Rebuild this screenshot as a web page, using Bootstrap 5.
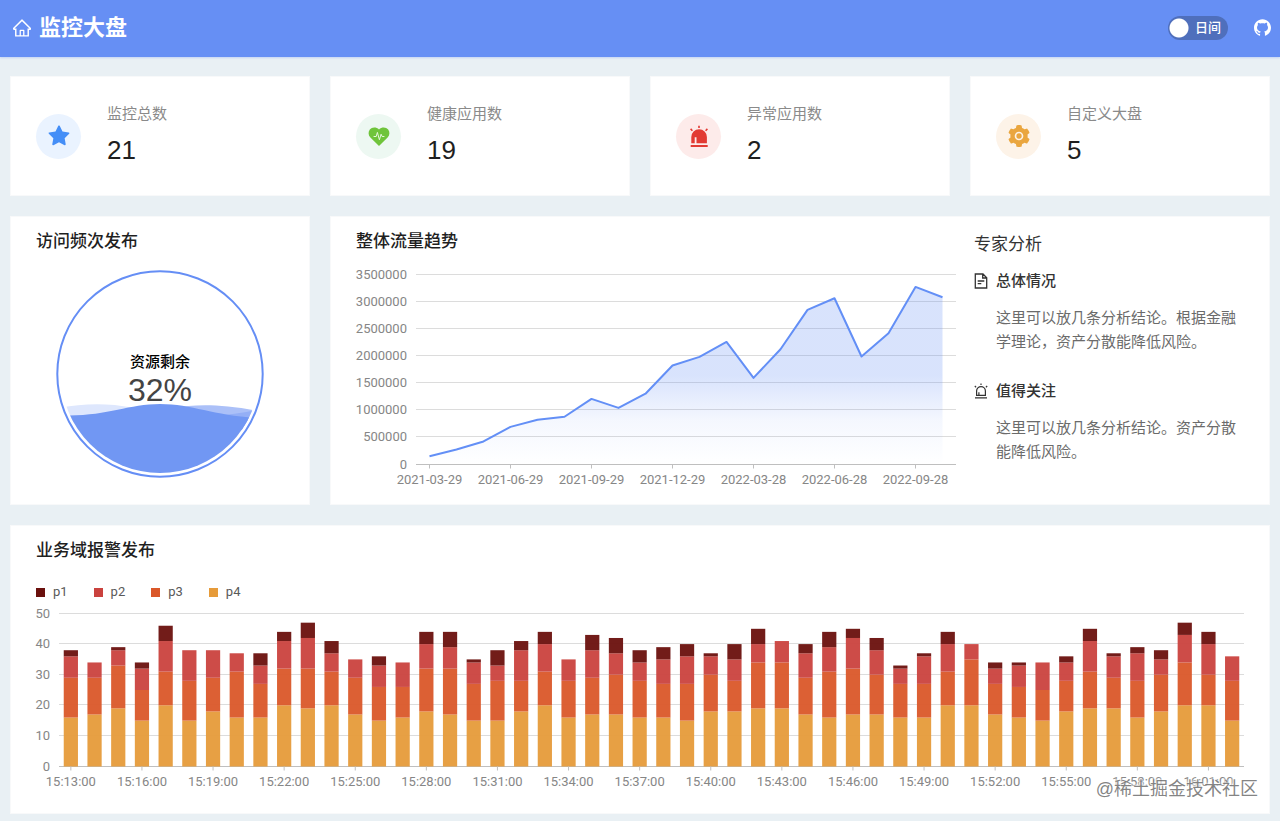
<!DOCTYPE html>
<html lang="zh-CN">
<head>
<meta charset="utf-8">
<meta name="viewport" content="width=device-width, initial-scale=1">
<title>监控大盘</title>
<link rel="stylesheet" href="https://cdn.jsdelivr.net/npm/bootstrap@5.3.0/dist/css/bootstrap.min.css">
<style>
  :root { --brand: #668ff4; --line: #5b8ff9; }
  body { background: #e9f0f4; color: #1f1f1f; font-family: "Liberation Sans", "Noto Sans CJK SC", sans-serif; font-size: 15px; line-height: 24px; }
  .topbar { background: var(--brand); height: 57px; padding: 0 9px 2px 13px; box-shadow: 0 1px 2px rgba(102, 143, 244, .3); }
  .topbar a { color: #fff; }
  .brand-title { font-size: 22px; line-height: 32px; font-weight: 700; margin: 0; }
  .mode-box { width: 60px; height: 24px; margin-right: 26px; }
  .form-check-input.mode-input { width: 60px; height: 24px; margin: 0; border: 0; border-radius: 12px; background: #4f6fbc radial-gradient(circle at 11px 12px, #fff 9px, transparent 10px) no-repeat; cursor: pointer; }
  .mode-text { position: absolute; right: 7px; top: 0; font-size: 13px; line-height: 24px; font-weight: 500; color: #fff; cursor: pointer; }
  .board { padding: 19px 10px 7px; }
  .board .row { --bs-gutter-x: 20px; --bs-gutter-y: 20px; margin-top: 0; }
  .board .row > * { margin-top: 0; margin-bottom: 20px; }
  .board .row > .col-12 { margin-bottom: 0; }
  .panel { height: 100%; background: #fff; border: 1px solid #f8f9fa; border-radius: 0; }
  .stat { min-height: 118px; padding: 0 25px; gap: 26px; }
  .stat-copy { padding-bottom: 4px; }
  .stat-icon { width: 45px; height: 45px; }
  .stat-label { color: #8a8a8a; }
  .stat-num { font-size: 26px; line-height: 32px; margin-top: 8px; }
  .bg-star { background: #eaf3ff; } .bg-heart { background: #edf8f2; }
  .bg-alert { background: #fdebea; } .bg-gear { background: #fdf3e8; }
  .panel-body { padding: 12px 25px; min-height: 287px; }
  .panel-title { font-size: 17px; line-height: 26px; font-weight: 500; margin: 0; }
  .gauge { width: 208px; margin: 15px auto 0; }
  .gauge-copy { position: absolute; left: 0; right: 0; top: 80px; text-align: center; }
  .gauge-name { color: #000; font-weight: 500; }
  .gauge-num { color: #444; font-size: 32px; line-height: 32px; }
  .trend-box { min-width: 0; margin-right: 18px; }
  .expert { flex: 0 0 270px; color: #333; padding-top: 3px; }
  .expert h2 { font-size: 17px; line-height: 26px; font-weight: 400; margin: 0 0 11px; }
  .expert h3 { font-size: 15px; line-height: 24px; font-weight: 500; margin: 0; }
  .expert p { color: #6b6b6b; margin: 13px 0 25px 22px; }
  .chart-svg { display: block; width: 100%; overflow: visible; }
  .chart-svg text, .legend { font-family: Roboto, sans-serif; font-size: 13px; }
  .chart-svg text { fill: #868686; }
  .legend { color: #595959; line-height: 16px; gap: 26px; margin: 20px 0 6px; padding: 0; list-style: none; }
  .legend li { gap: 8px; }
  .swatch { width: 9px; height: 9px; }
  .watermark { position: absolute; right: 11px; bottom: 11px; font-size: 18px; line-height: 26px; color: rgba(110, 110, 110, .85); text-shadow: 1px 1px 2px #fff, -1px -1px 2px #fff; }
  .c1 { fill: #6a100d; background: #6a100d; } .c2 { fill: #ca423e; background: #ca423e; }
  .c3 { fill: #da5729; background: #da5729; } .c4 { fill: #e69b3a; background: #e69b3a; }
</style>
</head>
<body>
<header class="topbar d-flex align-items-center justify-content-between">
  <a href="#" class="d-flex align-items-center gap-2 text-decoration-none">
    <svg width="18" height="18" viewBox="64 64 896 896" fill="currentColor" aria-hidden="true"><path d="M946.5 505L560.1 118.8l-25.9-25.9a31.5 31.5 0 00-44.4 0L77.5 505a63.9 63.9 0 00-18.8 46c.4 35.2 29.7 63.3 64.9 63.3h42.5V940h691.8V614.3h43.4c17.1 0 33.2-6.7 45.3-18.8a63.6 63.6 0 0018.7-45.3c0-17-6.7-33.1-18.8-45.2zM568 868H456V664h112v204zm217.9-325.7V868H632V640c0-22.1-17.9-40-40-40H432c-22.1 0-40 17.9-40 40v228H238.1V542.3h-96l370-369.7 23.1 23.1L882 542.3h-96.1z"/></svg>
    <h1 class="brand-title">监控大盘</h1>
  </a>
  <div class="d-flex align-items-center">
    <div class="mode-box position-relative">
      <input class="form-check-input mode-input" type="checkbox" role="switch" id="mode">
      <label class="mode-text" for="mode">日间</label>
    </div>
    <a href="#" aria-label="GitHub" class="d-flex"><svg width="17" height="17" viewBox="64 64 896 896" fill="currentColor"><path d="M511.6 76.3C264.3 76.2 64 276.4 64 523.5 64 718.9 189.3 885 363.8 946c23.5 5.9 19.9-10.8 19.9-22.2v-77.5c-135.7 15.9-141.2-73.9-150.3-88.9C215 726 171.5 718 184.5 703c30.9-15.9 62.4 4 98.9 57.9 26.4 39.1 77.9 32.5 104 26 5.7-23.5 17.9-44.5 34.7-60.8-140.6-25.2-199.2-111-199.2-213 0-49.5 16.3-95 48.3-131.7-20.4-60.5 1.9-112.3 4.9-120 58.1-5.2 118.5 41.6 123.2 45.3 33-8.9 70.7-13.6 112.9-13.6 42.4 0 80.2 4.9 113.5 13.9 11.3-8.6 67.3-48.8 121.3-43.9 2.9 7.7 24.7 58.3 5.5 118 32.4 36.8 48.9 82.7 48.9 132.3 0 102.2-59 188.1-200 212.9a127.5 127.5 0 0138.1 91v112.5c.8 9 0 17.9 15 17.9 177.1-59.7 304.6-227 304.6-424.1 0-247.2-200.4-447.3-447.5-447.3z"/></svg></a>
  </div>
</header>

<main class="container-fluid board">
  <div class="row">
    <div class="col-3"><section class="panel card"><div class="stat d-flex align-items-center">
      <span class="stat-icon bg-star rounded-circle d-flex align-items-center justify-content-center flex-shrink-0"><svg width="22" height="22" viewBox="64 52 896 896" fill="#448ef7"><path d="M908.1 353.1l-253.9-36.9L540.7 86.1c-3.1-6.3-8.2-11.4-14.5-14.5-15.8-7.8-35-1.3-42.9 14.5L369.8 316.2l-253.9 36.9c-7 1-13.4 4.3-18.3 9.3a32.05 32.05 0 00.6 45.3l183.7 179.1-43.4 252.9a31.95 31.95 0 0046.4 33.7L512 754l227.1 119.4c6.2 3.3 13.4 4.4 20.3 3.2 17.4-3 29.1-19.5 26.1-36.9l-43.4-252.9 183.7-179.1c5-4.9 8.3-11.3 9.3-18.3 2.7-17.5-9.5-33.7-27-36.3z"/></svg></span>
      <div class="stat-copy"><div class="stat-label">监控总数</div><div class="stat-num">21</div></div>
    </div></section></div>
    <div class="col-3"><section class="panel card"><div class="stat d-flex align-items-center">
      <span class="stat-icon bg-heart rounded-circle d-flex align-items-center justify-content-center flex-shrink-0"><svg width="22" height="22" viewBox="0 0 22 22"><path fill="#6fc43b" d="M11 21 2.4 12.6C.2 10.4 0 6.8 1.8 4.5 4 1.8 8.3 1.8 11 4.4c2.7-2.6 7-2.6 9.2.1 1.8 2.3 1.6 5.9-.6 8.1z"/><path fill="none" stroke="#e5f6dc" stroke-linejoin="round" stroke-linecap="round" d="M6 11.5h2.2L9.4 7.4l2 7.4 1.7-5.6 1 2.3H16"/></svg></span>
      <div class="stat-copy"><div class="stat-label">健康应用数</div><div class="stat-num">19</div></div>
    </div></section></div>
    <div class="col-3"><section class="panel card"><div class="stat d-flex align-items-center">
      <span class="stat-icon bg-alert rounded-circle d-flex align-items-center justify-content-center flex-shrink-0"><svg width="22" height="22" viewBox="0 0 22 22"><path fill="#e23a33" d="M3.3 12.1a7.8 7.8 0 0 1 15.6 0v6.2H8.5v-6H6.7v6H3.3zM2.7 20h17v2h-17z"/><path stroke="#e23a33" stroke-width="1.6" d="M11 .7V3M2.6 3.9l1.8 1.8M19.4 3.9l-1.8 1.8"/></svg></span>
      <div class="stat-copy"><div class="stat-label">异常应用数</div><div class="stat-num">2</div></div>
    </div></section></div>
    <div class="col-3"><section class="panel card"><div class="stat d-flex align-items-center">
      <span class="stat-icon bg-gear rounded-circle d-flex align-items-center justify-content-center flex-shrink-0"><svg width="22" height="22" viewBox="64 64 896 896" fill="#eaa63f"><path fill-rule="evenodd" d="M512.5 402.500a110 110 0 1 0 0 220a110 110 0 1 0 0-220zM924.800 626.100l-65.400-55.900c3.100-19 4.700-38.400 4.700-57.700s-1.600-38.800-4.700-57.700l65.400-55.900a32.030 32.030 0 009.300-35.200l-.9-2.600a442.500 442.500 0 00-79.600-137.700l-1.800-2.100a32.120 32.120 0 00-35.100-9.500l-81.200 28.900c-30-24.600-63.400-44-99.600-57.500l-15.700-84.900a32.050 32.050 0 00-25.800-25.700l-2.700-.5c-52-9.400-106.800-9.400-158.800 0l-2.700.5a32.050 32.050 0 00-25.800 25.700l-15.800 85.300a353.440 353.440 0 00-98.900 57.300l-81.800-29.100a32 32 0 00-35.100 9.500l-1.800 2.100a445.930 445.930 0 00-79.600 137.700l-.9 2.600c-4.500 12.500-.8 26.500 9.300 35.200l66.200 56.500c-3.100 18.800-4.600 38-4.600 57 0 19.200 1.500 38.400 4.600 57l-66 56.500a32.030 32.030 0 00-9.300 35.200l.9 2.600c18.100 50.300 44.800 96.800 79.600 137.700l1.800 2.100a32.120 32.120 0 0035.100 9.500l81.800-29.100c29.800 24.500 63 43.900 98.900 57.300l15.800 85.300a32.050 32.050 0 0025.800 25.700l2.700.5a448.270 448.270 0 00158.800 0l2.700-.5a32.050 32.050 0 0025.800-25.700l15.700-84.900c36.200-13.600 69.600-32.900 99.600-57.500l81.200 28.900a32 32 0 0035.100-9.500l1.800-2.100c34.800-41.100 61.500-87.400 79.600-137.700l.9-2.600c4.300-12.400.6-26.300-9.500-35zM512.500 336.500a176 176 0 1 1 0 352a176 176 0 1 1 0-352z"/></svg></span>
      <div class="stat-copy"><div class="stat-label">自定义大盘</div><div class="stat-num">5</div></div>
    </div></section></div>

    <div class="col-3"><section class="panel card"><div class="panel-body">
      <h2 class="panel-title">访问频次发布</h2>
      <div class="gauge position-relative">
        <svg class="d-block" width="208" height="208" viewBox="0 0 208 208" aria-hidden="true">
          <defs><clipPath id="bowl"><circle cx="104" cy="104" r="99"/></clipPath></defs>
          <g clip-path="url(#bowl)">
            <path fill="#dee7fd" d="M0 139C20 134 50 132 76 138L120 150H0z"/>
            <path fill="#abc0f8" d="M90 146C120 136 146 130 208 142V160H90z"/>
            <path fill="#94aff6" d="M150 145C172 146 184 143 208 139V160H150z"/>
            <path fill="#7197f3" d="M0 145C48 148 70 134 104 134S160 147 208 148V208H0z"/>
          </g>
          <circle cx="104" cy="104" r="102.700" fill="none" stroke="#658ef5" stroke-width="2"/>
        </svg>
        <div class="gauge-copy"><div class="gauge-name">资源剩余</div><div class="gauge-num">32%</div></div>
      </div>
    </div></section></div>

    <div class="col-9"><section class="panel card"><div class="panel-body d-flex">
      <div class="trend-box flex-grow-1">
        <h2 class="panel-title">整体流量趋势</h2>
        <svg class="chart-svg mt-3" id="trend" height="216" role="img" aria-label="整体流量趋势"></svg>
      </div>
      <aside class="expert">
        <h2>专家分析</h2>
        <h3 class="d-flex align-items-center gap-2"><svg width="14" height="16" viewBox="0 0 14 16" fill="none" stroke="currentColor" stroke-width="1.300"><path d="M1.300 1h7.700l3.700 3.700V15H1.300zM8.700 1v4h4M3.700 8h6.600M3.700 10.700h3.600"/></svg>总体情况</h3>
        <p>这里可以放几条分析结论。根据金融学理论，资产分散能降低风险。</p>
        <h3 class="d-flex align-items-center gap-2"><svg width="14" height="16" viewBox="0 0 14 16" fill="none" stroke="currentColor" stroke-width="1.200"><path d="M2.600 12.300V8a4.400 4.400 0 0 1 8.800 0v4.300zM4.900 12V9.300M1 14.900h12M7 .5v1.600M.8 3l1.300 1.200M13.200 3l-1.300 1.200"/></svg>值得关注</h3>
        <p class="mb-0">这里可以放几条分析结论。资产分散能降低风险。</p>
      </aside>
    </div></section></div>

    <div class="col-12"><section class="panel card position-relative"><div class="panel-body">
      <h2 class="panel-title">业务域报警发布</h2>
      <ul class="legend d-flex">
        <li class="d-flex align-items-center"><span class="swatch c1"></span>p1</li>
        <li class="d-flex align-items-center"><span class="swatch c2"></span>p2</li>
        <li class="d-flex align-items-center"><span class="swatch c3"></span>p3</li>
        <li class="d-flex align-items-center"><span class="swatch c4"></span>p4</li>
      </ul>
      <svg class="chart-svg" id="alarms" height="190" role="img" aria-label="业务域报警发布"></svg>
    </div><div class="watermark">@稀土掘金技术社区</div></section></div>
  </div>
</main>

<script src="https://cdn.jsdelivr.net/npm/bootstrap@5.3.0/dist/js/bootstrap.bundle.min.js"></script>
<script>
  // Monthly traffic, in thousands
  const traffic = [153, 276, 424, 693, 825, 880, 1208, 1043, 1304, 1824, 1982, 2258, 1595, 2124, 2848, 3063, 1989, 2419, 3271, 3082];
  const trafficDates = ['2021-03-29', '2021-06-29', '2021-09-29', '2021-12-29', '2022-03-28', '2022-06-28', '2022-09-28'];
  // Alarms per minute as running totals: p4, +p3, +p2, +p1
  const alarms = `16,29,36,38 17,29,34,34 19,33,38,39 15,25,32,34 20,31,41,46 15,28,38,38 18,29,38,38 16,31,37,37 16,27,33,37 20,32,41,44
    19,32,42,47 20,31,37,41 17,29,35,35 15,26,33,36 16,26,34,34 18,32,40,44 17,32,39,44 15,27,34,35 15,28,33,38 18,28,38,41
    20,31,40,44 16,28,35,35 17,29,38,43 17,30,37,42 16,28,34,38 16,27,35,39 15,27,36,40 18,30,36,37 18,28,35,40 19,34,40,45
    19,34,41,41 17,29,37,40 16,31,39,44 17,32,42,45 17,30,38,42 16,27,32,33 16,27,36,37 20,31,40,44 20,35,40,40 17,27,32,34
    16,26,33,34 15,25,34,34 18,28,34,36 19,31,41,45 19,29,36,37 16,28,37,39 18,30,35,38 20,34,43,47 20,30,40,44 15,28,36,36`
    .trim().split(/\s+/).map(s => s.split(',').map(Number));

  const grid = (left, right, y, base) =>
    `<line x1="${left}" x2="${right}" y1="${y}" y2="${y}" stroke="${base ? '#bfbfbf' : '#dcdcdc'}"/>`;
  const label = (x, y, text, anchor) => `<text x="${x}" y="${y}" text-anchor="${anchor}">${text}</text>`;
  const tick = (x, y) => `<line x1="${x}" x2="${x}" y1="${y}" y2="${y + 4}" stroke="#bfbfbf"/>`;

  function drawTrend() {
    const svg = document.getElementById('trend'), w = svg.clientWidth;
    const left = 60, top = 3.5, bottom = 193.5, step = (w - left) / traffic.length;
    const px = i => left + step * (i + .5), py = v => bottom - v / 3500 * (bottom - top);
    let out = '<defs><linearGradient id="fade" x1="0" x2="0" y1="0" y2="1"><stop offset=".5" stop-color="#658ff5" stop-opacity=".25"/><stop offset=".75" stop-color="#658ff5" stop-opacity=".07"/><stop offset="1" stop-color="#658ff5" stop-opacity="0"/></linearGradient></defs>';
    for (let v = 0; v <= 3500; v += 500) {
      const y = Math.round(py(v)) - .5;
      out += grid(left, w, y, v === 0) + label(51, y + 4, v * 1000, 'end');
    }
    const pts = traffic.map((v, i) => px(i) + ',' + py(v)).join(' ');
    out += `<polygon points="${px(0)},${bottom} ${pts} ${px(19)},${bottom}" fill="url(#fade)"/>`;
    out += `<polyline points="${pts}" fill="none" stroke="#638ff6" stroke-width="2" stroke-linejoin="round"/>`;
    trafficDates.forEach((d, i) => { out += tick(px(i * 3), bottom) + label(px(i * 3), bottom + 19, d, 'middle'); });
    svg.innerHTML = out;
  }

  function drawAlarms() {
    const svg = document.getElementById('alarms'), w = svg.clientWidth;
    const left = 23, top = 7.5, bottom = 160.5, step = (w - left) / alarms.length, bar = step * .6;
    const py = v => bottom - v / 50 * (bottom - top);
    let out = '';
    for (let v = 0; v <= 50; v += 10) {
      const y = Math.round(py(v)) - .5;
      out += grid(left, w, y, v === 0) + label(14, y + 4, v, 'end');
    }
    alarms.forEach((totals, i) => {
      const mid = left + step * (i + .5);
      let from = 0;
      totals.forEach((to, k) => {
        if (to > from) out += `<rect class="c${4 - k}" opacity=".95" x="${mid - bar / 2}" width="${bar}" y="${py(to)}" height="${py(from) - py(to)}"/>`;
        from = to;
      });
      if (i % 3 === 0) {
        const m = 13 + i, time = (15 + Math.floor(m / 60)) + ':' + String(m % 60).padStart(2, '0') + ':00';
        out += tick(mid, bottom) + label(mid, bottom + 19, time, 'middle');
      }
    });
    svg.innerHTML = out;
  }

  const draw = () => { drawTrend(); drawAlarms(); };
  draw();
  window.addEventListener('resize', draw);
</script>
</body>
</html>
